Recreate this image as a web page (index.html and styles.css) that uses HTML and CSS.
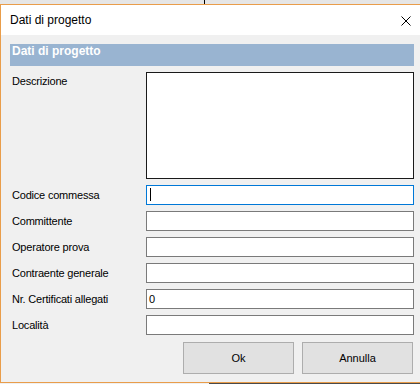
FILE: index.html
```html
<!DOCTYPE html>
<html lang="it">
<head>
  <meta charset="UTF-8" />
  <meta name="viewport" content="width=device-width, initial-scale=1.0"/>
  <title>Dati di progetto</title>
  <link rel="stylesheet" href="styles.css">
</head>
<body>
  <div class="backdrop-top"><span class="edge"></span></div>

  <div class="dialog">
    <div class="titlebar">
      <span class="title">Dati di progetto</span>
      <svg class="close" width="10" height="10" viewBox="0 0 10 10">
        <path d="M0.5 0.5 L9.5 9.5 M9.5 0.5 L0.5 9.5" stroke="#000" stroke-width="1" fill="none"/>
      </svg>
    </div>

    <div class="content">
      <div class="section">Dati di progetto</div>

      <div class="form">
        <label class="label top">Descrizione</label>
        <div class="memo"></div>

        <label class="label">Codice commessa</label>
        <div class="field focus"><span class="caret"></span></div>

        <label class="label">Committente</label>
        <div class="field"></div>

        <label class="label">Operatore prova</label>
        <div class="field"></div>

        <label class="label">Contraente generale</label>
        <div class="field"></div>

        <label class="label">Nr. Certificati allegati</label>
        <div class="field">0</div>

        <label class="label">Località</label>
        <div class="field"></div>
      </div>

      <div class="actions">
        <button class="btn">Ok</button>
        <button class="btn">Annulla</button>
      </div>
    </div>
  </div>

  <div class="backdrop-bottom"><span class="shade"></span></div>
</body>
</html>
```

FILE: styles.css
```css
body {
  margin: 0;
  background: #f0f0f0;
  font-family: "Liberation Sans", Arial, sans-serif;
  font-size: 11px;
  color: #000;
  overflow: hidden;
  width: 420px;
  height: 384px;
}

.backdrop-top {
  height: 4px;
  background: #e6e6e6;
}

.backdrop-top .edge {
  display: block;
  width: 1px;
  height: 4px;
  margin-left: 204px;
  background: #000;
}

.backdrop-bottom {
  height: 1px;
  background: #f0f0f0;
}

.backdrop-bottom .shade {
  display: block;
  height: 1px;
  margin-left: 209px;
  background: #4a4a4a;
}

.dialog {
  width: 430px;
  border-top: 1px solid #e99d4a;
  border-left: 1px solid #e99d4a;
  border-bottom: 1px solid #e99d4a;
  background: #f0f0f0;
}

.titlebar {
  height: 30px;
  background: #fff;
  display: flex;
  align-items: center;
  justify-content: space-between;
  padding: 0 20px 0 9px;
}

.title {
  font-size: 12px;
  line-height: 30px;
}

.close {
  display: block;
  margin-top: 1px;
}

.content {
  width: 404px;
  padding: 9px 0 8px 9px;
}

.section {
  height: 22px;
  background: #99b4d1;
  color: #fff;
  font-weight: bold;
  font-size: 12px;
  line-height: 14px;
  padding-left: 2px;
  box-sizing: border-box;
}

.form {
  display: grid;
  grid-template-columns: 136px 1fr;
  row-gap: 6px;
  margin-top: 6px;
}

.label {
  align-self: center;
  padding-left: 2px;
  line-height: 13px;
  letter-spacing: -0.2px;
}

.label.top {
  align-self: start;
  padding-top: 3px;
}

.memo {
  height: 107px;
  background: #fff;
  border: 1px solid #1a1a1a;
  box-sizing: border-box;
}

.field {
  height: 20px;
  background: #fff;
  border: 1px solid #7a7a7a;
  box-sizing: border-box;
  padding-left: 2px;
  line-height: 18px;
}

.field.focus {
  border-color: #0078d7;
}

.caret {
  display: block;
  width: 1px;
  height: 13px;
  margin: 2px 0 0 1px;
  background: #000;
}

.actions {
  display: flex;
  justify-content: flex-end;
  gap: 8px;
  margin-top: 7px;
  padding-right: 1px;
}

.btn {
  width: 111px;
  height: 32px;
  background: #e1e1e1;
  border: 1px solid #adadad;
  font-family: inherit;
  font-size: 11px;
  color: #000;
  padding: 0;
  margin: 0;
}
```
